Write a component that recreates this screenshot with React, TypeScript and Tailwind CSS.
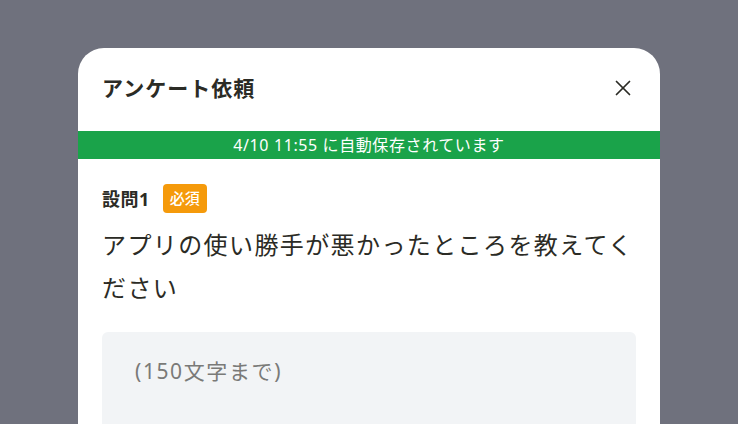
import { X } from "lucide-react";

export default function App() {
  return (
    <div
      className="h-[424px] w-[738px] overflow-hidden bg-[#6f717d] pt-[48px] pl-[78px]"
      style={{ fontFamily: '"Noto Sans", "Noto Sans CJK JP", sans-serif' }}
    >
      <div className="w-[582px] h-[400px] bg-white rounded-t-[26px] overflow-hidden">
        <div className="flex items-center justify-between h-[83px] pl-[24px] pr-[24px] pb-[3px]">
          <h1 className="text-[21px] font-bold text-[#2b2b25] leading-none tracking-[1px]">
            アンケート依頼
          </h1>
          <X className="h-[26px] w-[26px] text-[#2b2b25]" strokeWidth={1.6} />
        </div>
        <div className="h-[28px] bg-[#1aa34a] flex items-center justify-center text-white text-[16px] leading-none tracking-[0.6px]">
          4/10 11:55 に自動保存されています
        </div>
        <div className="px-[24px] pt-[25px]">
          <div className="flex items-center gap-[13px]">
            <span className="text-[18px] font-bold text-[#2b2b25] leading-none tracking-[0.5px]">
              設問1
            </span>
            <span className="bg-[#f59a0b] text-white text-[15px] font-medium rounded-[4px] h-[29px] px-[7px] flex items-center leading-none">
              必須
            </span>
          </div>
          <p className="mt-[10px] w-[534px] text-[24px] leading-[43px] text-[#2b2b25] tracking-[1.4px]">
            アプリの使い勝手が悪かったところを教えてください
          </p>
          <div className="mt-[23px] h-[120px] bg-[#f2f4f6] rounded-[6px] px-[33px] pt-[26px] text-[21px] leading-[26px] text-[#7a7a78] tracking-[1.6px]">
            (150文字まで)
          </div>
        </div>
      </div>
    </div>
  );
}
